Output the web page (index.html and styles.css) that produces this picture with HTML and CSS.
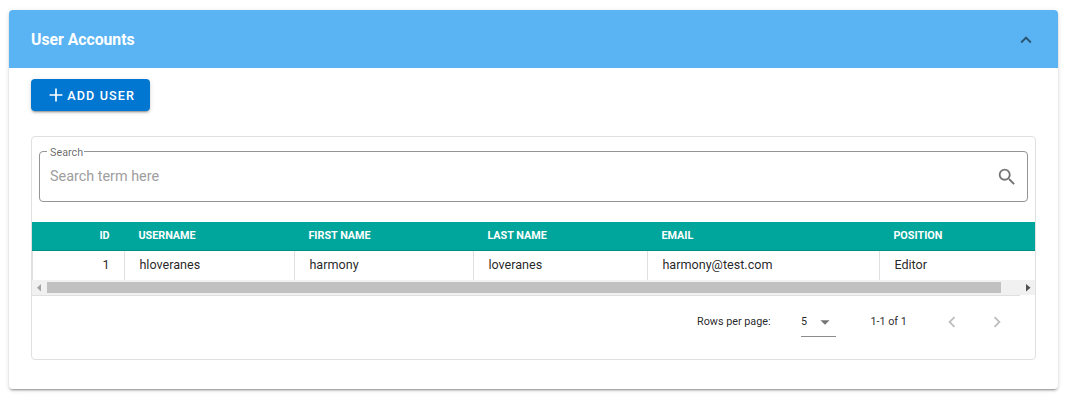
FILE: index.html
```html
<!DOCTYPE html>
<html lang="en">
<head>
<meta charset="utf-8">
<title>User Accounts</title>
<link rel="stylesheet" href="styles.css">
</head>
<body>
<section class="card">
  <header class="card-header">
    <h1 class="card-title">User Accounts</h1>
    <svg class="chevron" viewBox="0 0 24 24"><path d="M7.41,15.41L12,10.83L16.59,15.41L18,14L12,8L6,14L7.41,15.41Z"/></svg>
  </header>
  <div class="card-body">
    <button class="add-button">
      <svg class="plus" viewBox="0 0 24 24"><path d="M19,12.9H12.9V19H11.1V12.9H5V11.1H11.1V5H12.9V11.1H19V12.9Z"/></svg>
      <span>ADD USER</span>
    </button>
    <div class="panel">
      <fieldset class="search">
        <legend class="search-label">Search</legend>
        <div class="search-row">
          <input class="search-input" type="text" placeholder="Search term here">
          <svg class="magnifier" viewBox="0 0 24 24"><path d="M9.5,3A6.5,6.5 0 0,1 16,9.5C16,11.11 15.41,12.59 14.44,13.73L14.71,14H15.5L20.5,19L19,20.5L14,15.5V14.71L13.73,14.44C12.59,15.41 11.11,16 9.5,16A6.5,6.5 0 0,1 3,9.5A6.5,6.5 0 0,1 9.5,3M9.5,5C7,5 5,7 5,9.5C5,12 7,14 9.5,14C12,14 14,12 14,9.5C14,7 12,5 9.5,5Z"/></svg>
        </div>
      </fieldset>
      <div class="table">
        <div class="row head">
          <div class="cell number">ID</div><div class="cell">USERNAME</div><div class="cell">FIRST NAME</div><div class="cell">LAST NAME</div><div class="cell">EMAIL</div><div class="cell">POSITION</div>
        </div>
        <div class="row data">
          <div class="cell number">1</div><div class="cell">hloveranes</div><div class="cell">harmony</div><div class="cell">loveranes</div><div class="cell">harmony@test.com</div><div class="cell">Editor</div>
        </div>
      </div>
      <div class="scrollbar">
        <svg class="arrow arrow-left" viewBox="0 0 15 15"><path d="M9 4v7.5L5 7.75z"/></svg>
        <div class="thumb"></div>
        <svg class="arrow" viewBox="0 0 15 15"><path d="M6 4v7.5l4.5-3.75z"/></svg>
      </div>
      <footer class="footer">
        <span class="rows-label">Rows per page:</span>
        <div class="select"><span>5</span><svg class="caret" viewBox="0 0 24 24"><path d="M7,10L12,15L17,10H7Z"/></svg></div>
        <span class="range">1-1 of 1</span>
        <svg class="pager" viewBox="0 0 24 24"><path d="M15.41,16.58L10.83,12L15.41,7.41L14,6L8,12L14,18L15.41,16.58Z"/></svg>
        <svg class="pager" viewBox="0 0 24 24"><path d="M8.59,16.58L13.17,12L8.59,7.41L10,6L16,12L10,18L8.59,16.58Z"/></svg>
      </footer>
    </div>
  </div>
</section>
</body>
</html>
```
FILE: styles.css
```css
* { box-sizing: border-box; }
body {
  margin: 0;
  padding: 10px 10px 13px 9px;
  background: #fff;
  font-family: Roboto, sans-serif;
  color: rgba(0, 0, 0, .87);
}
svg { display: block; flex: none; }
.card {
  height: 379px;
  border-radius: 4px;
  background: #fff;
  box-shadow: 0 3px 1px -2px rgba(0,0,0,.2), 0 2px 2px 0 rgba(0,0,0,.14), 0 1px 5px 0 rgba(0,0,0,.12);
}
.card-header {
  display: flex;
  align-items: center;
  justify-content: space-between;
  height: 58px;
  padding: 0 21px 0 22px;
  border-radius: 4px 4px 0 0;
  background: #5ab4f3;
}
.card-title { margin: 0; font-size: 15.75px; font-weight: 700; color: #fff; }
.chevron { width: 22px; height: 22px; margin-top: 2px; fill: rgba(0,0,0,.54); }
.card-body { padding: 11px 22px 0; }
.add-button {
  display: flex;
  align-items: center;
  width: 119px;
  height: 32px;
  padding: 0 0 0 14px;
  border: 0;
  border-radius: 4px;
  background: #0277d2;
  color: #fff;
  font: 500 12.6px Roboto, sans-serif;
  letter-spacing: 1.125px;
  white-space: nowrap;
  box-shadow: 0 3px 1px -2px rgba(0,0,0,.2), 0 2px 2px 0 rgba(0,0,0,.14), 0 1px 5px 0 rgba(0,0,0,.12);
}
.plus { width: 22px; height: 22px; margin-left: .3px; fill: #fff; }
.panel {
  width: 1005px;
  height: 224px;
  margin-top: 25px;
  border: 1px solid #e0e0e0;
  border-radius: 4px;
}
.search {
  height: 57px;
  margin: 8px 7px 20px;
  padding: 0 9px 0 7px;
  min-width: 0;
  border: 1px solid #949494;
  border-radius: 4px;
}
.search-label {
  height: 13px;
  padding: 1px 1px 0 3px;
  font-size: 10.8px;
  line-height: 14px;
  color: rgba(0,0,0,.6);
}
.search-row { display: flex; align-items: center; height: 36px; }
.search-input {
  flex: 1;
  padding: 0 0 0 3px;
  border: 0;
  outline: 0;
  background: none;
  font: 14.4px Roboto, sans-serif;
}
.search-input::placeholder { color: #9e9e9e; opacity: 1; }
.magnifier { width: 22px; height: 22px; margin-top: 2px; fill: #757575; }
.row { display: grid; grid-template-columns: 92px 170px 179px 174px 232px 1fr; }
.cell { padding-left: 14.4px; }
.number { padding: 0 14.4px 0 0; text-align: right; }
.head {
  height: 29px;
  border-bottom: 1px solid #008f85;
  background: #00a69b;
  color: #fff;
  font-size: 10.8px;
  font-weight: 700;
  line-height: 27px;
}
.data { height: 29px; font-size: 12.6px; line-height: 28px; }
.data .cell { border-left: 1px solid #e0e0e0; }
.scrollbar { display: flex; height: 15px; background: #f1f1f1; }
.arrow { width: 15px; height: 15px; fill: #505050; }
.arrow-left { fill: #a3a3a3; }
.thumb { width: 954px; height: 11px; margin: 2px 19px 2px 0; background: #c1c1c1; }
.footer {
  display: flex;
  align-items: center;
  width: 988px;
  height: 53px;
  border-top: 1px solid #e0e0e0;
  font-size: 10.8px;
}
.footer > * { flex: none; }
.rows-label { margin-left: 665px; width: 104px; padding-bottom: 2px; }
.select {
  display: flex;
  align-items: center;
  justify-content: space-between;
  width: 35px;
  height: 30px;
  border-bottom: 1px solid #8c8c8c;
}
.caret { width: 22px; height: 22px; fill: #757575; }
.range { width: 71px; margin-left: 34.4px; padding-bottom: 2px; }
.pager { width: 22px; height: 22px; margin-right: 23px; fill: #bdbdbd; }
```
